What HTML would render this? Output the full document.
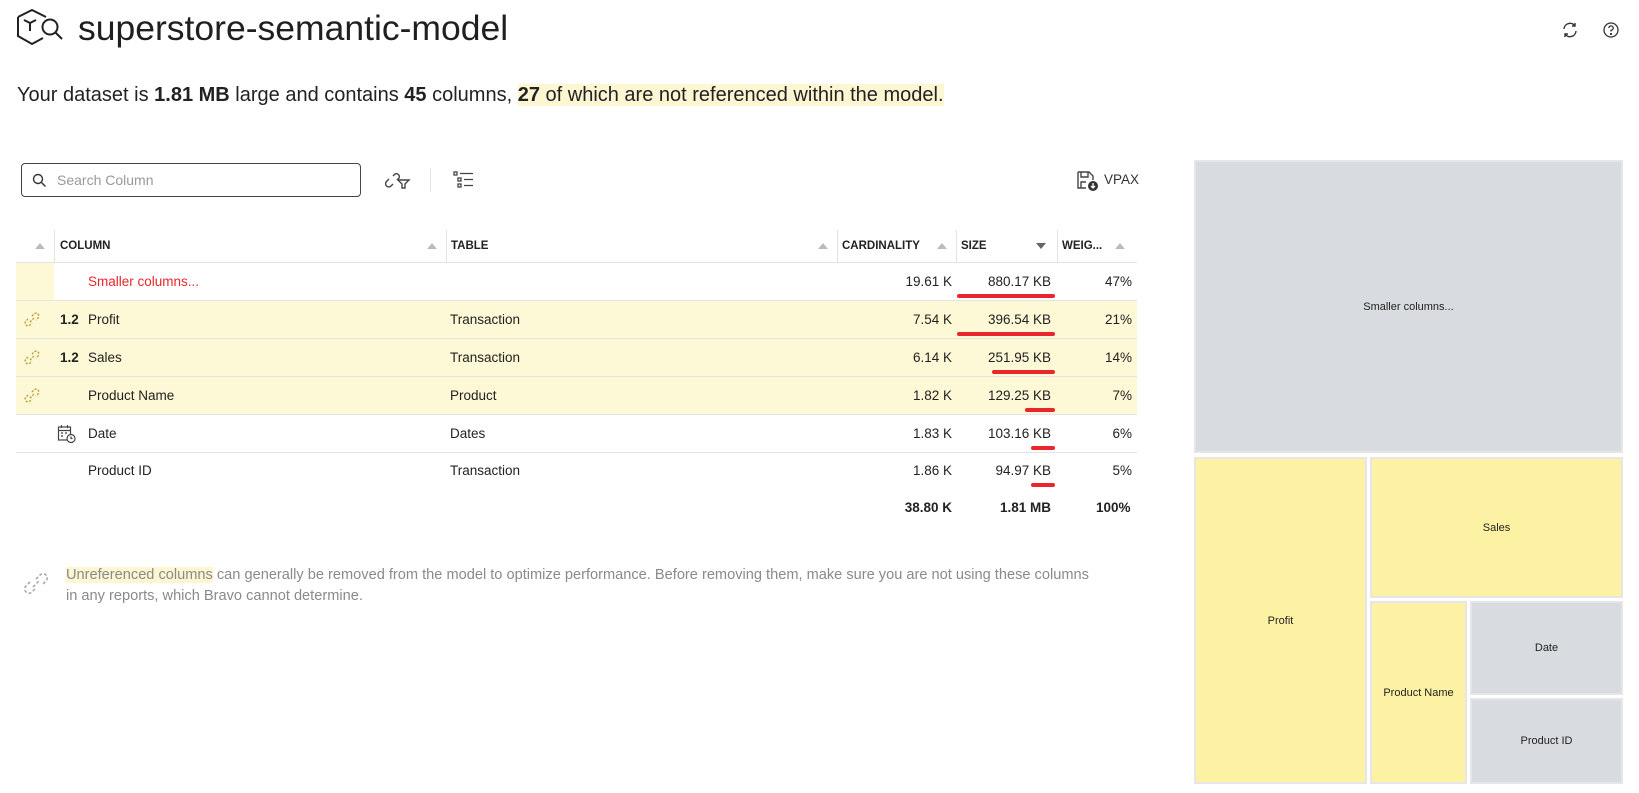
<!DOCTYPE html>
<html><head><meta charset="utf-8"><style>
*{box-sizing:border-box;margin:0;padding:0}
body{width:1639px;height:793px;background:#fff;font-family:"Liberation Sans",sans-serif;color:#222;position:relative;overflow:hidden}
.a{position:absolute}
.title{left:78px;top:8px;font-size:35.5px;color:#1f1f1f}
.sub{left:17px;top:84px;font-size:20px;color:#222}
.hl{background:#fdf6d2}
.search{left:21px;top:163px;width:340px;height:34px;border:1px solid #444;border-radius:4px}
.search span{position:absolute;left:35px;top:8px;font-size:14px;color:#999}
.th{top:230px;height:32px;font-size:11.5px;font-weight:bold;color:#222;line-height:32px}
.row{left:16px;width:1121px;height:38px;border-bottom:1px solid #e3e3e3;font-size:13.5px;line-height:37px}
.y{background:#fdf8d6}
.c{position:absolute;top:0}
.r{text-align:right}
.bar{position:absolute;height:4px;background:#e8262b;border-radius:2px}
.tm{position:absolute;border:2px solid #e6e6e6;display:flex;align-items:center;justify-content:center;font-size:11px;color:#222}
.g{background:#d8dce0}.ye{background:#fdf2a3}
.tri{position:absolute;width:0;height:0;border-left:5px solid transparent;border-right:5px solid transparent;border-bottom:6px solid #bbb}
.note{left:66px;top:565px;font-size:14.6px;color:#8a8a8a;line-height:21px;width:1080px}
.sep{background:#e3e3e3;width:1px}
</style></head><body>
<svg class="a" style="left:15px;top:7px" width="52" height="42" viewBox="0 0 52 42" fill="none" stroke="#222" stroke-width="2"><path d="M3 10 L17 3 L31 10 M3 10 V29 L17 37 L28 31"/><path d="M9 13 L15 16 L21 13 M15 16 V24"/><circle cx="35" cy="20" r="7.5"/><path d="M40.5 25.5 L47 32"/></svg>
<div class="a title">superstore-semantic-model</div>
<svg class="a" style="left:1561px;top:21px" width="18" height="18" viewBox="0 0 18 18" fill="none" stroke="#333" stroke-width="1.4"><path d="M3 8 A6 6 0 0 1 14 5 M14 2 V5 H11 M15 10 A6 6 0 0 1 4 13 M4 16 V13 H7"/></svg>
<svg class="a" style="left:1602px;top:21px" width="18" height="18" viewBox="0 0 18 18" fill="none" stroke="#333" stroke-width="1.3"><circle cx="9" cy="9" r="7"/><path d="M6.8 7 A2.2 2.2 0 1 1 9 9.3 V10.5"/><circle cx="9" cy="13" r="0.5" fill="#333"/></svg>
<div class="a sub">Your dataset is <b>1.81 MB</b> large and contains <b>45</b> columns, <span class="hl"><b>27</b> of which are not referenced within the model.</span></div>
<div class="a search"><svg class="a" style="left:10px;top:9px" width="15" height="15" viewBox="0 0 15 15" fill="none" stroke="#333" stroke-width="1.4"><circle cx="6" cy="6" r="4.5"/><path d="M9.5 9.5 L13.5 13.5"/></svg><span>Search Column</span></div>
<svg class="a" style="left:385px;top:170px" width="26" height="20" viewBox="0 0 26 20" fill="none" stroke="#444" stroke-width="1.4"><path d="M4 9 L1.5 11.5 A3 3 0 0 0 6 16 L8 14 M8 6 L10 4 A3 3 0 0 1 14 8 L12 10"/><path d="M13 10 H24 L20 14 V18 L17 18 V14 Z"/></svg>
<div class="a sep" style="left:430px;top:168px;height:24px"></div>
<svg class="a" style="left:453px;top:171px" width="22" height="18" viewBox="0 0 22 18" fill="none" stroke="#444" stroke-width="1.3"><rect x="1" y="1" width="3" height="3"/><rect x="5" y="7" width="3" height="3"/><rect x="5" y="13" width="3" height="3"/><path d="M7 2.5 H20 M11 8.5 H20 M11 14.5 H20"/></svg>
<svg class="a" style="left:1076px;top:170px" width="24" height="22" viewBox="0 0 24 22" fill="none" stroke="#444" stroke-width="1.4"><path d="M2 2 H13 L17 6 V10 M2 2 V18 H10 M5 2 V7 H12 V2 M5 18 V12 H10"/><circle cx="17" cy="16" r="5" fill="#333" stroke="none"/><path d="M17 13 V18 M15 16 L17 18 L19 16" stroke="#fff" stroke-width="1.3"/></svg>
<div class="a" style="left:1104px;top:172px;font-size:13.5px;color:#333">VPAX</div>

<div class="a" style="left:16px;top:262px;width:1121px;height:1px;background:#e3e3e3"></div>
<div class="tri" style="left:35px;top:243px"></div>
<div class="a sep" style="left:54px;top:230px;height:32px"></div>
<div class="a th" style="left:60px">COLUMN</div>
<div class="tri" style="left:427px;top:243px"></div>
<div class="a sep" style="left:446px;top:230px;height:32px"></div>
<div class="a th" style="left:451px">TABLE</div>
<div class="tri" style="left:818px;top:243px"></div>
<div class="a sep" style="left:837px;top:230px;height:32px"></div>
<div class="a th" style="left:842px">CARDINALITY</div>
<div class="tri" style="left:937px;top:243px"></div>
<div class="a sep" style="left:956px;top:230px;height:32px"></div>
<div class="a th" style="left:961px">SIZE</div>
<div class="a" style="left:1036px;top:243px;border-left:5px solid transparent;border-right:5px solid transparent;border-top:6px solid #666"></div>
<div class="a sep" style="left:1057px;top:230px;height:32px"></div>
<div class="a th" style="left:1062px">WEIG...</div>
<div class="tri" style="left:1115px;top:243px"></div>

<div class="a row" style="top:263px">
 <div class="c y" style="left:0;width:38px;height:37px"></div>
 <div class="c" style="left:72px;color:#e8262b">Smaller columns...</div>
 <div class="c r" style="right:185px">19.61 K</div><div class="c r" style="right:86px">880.17 KB</div><div class="c r" style="right:5px">47%</div>
</div>
<div class="a row y" style="top:301px">
 <div class="c" style="left:44px;font-weight:bold">1.2</div><div class="c" style="left:72px">Profit</div><div class="c" style="left:434px">Transaction</div>
 <div class="c r" style="right:185px">7.54 K</div><div class="c r" style="right:86px">396.54 KB</div><div class="c r" style="right:5px">21%</div>
</div>
<div class="a row y" style="top:339px">
 <div class="c" style="left:44px;font-weight:bold">1.2</div><div class="c" style="left:72px">Sales</div><div class="c" style="left:434px">Transaction</div>
 <div class="c r" style="right:185px">6.14 K</div><div class="c r" style="right:86px">251.95 KB</div><div class="c r" style="right:5px">14%</div>
</div>
<div class="a row y" style="top:377px">
 <div class="c" style="left:72px">Product Name</div><div class="c" style="left:434px">Product</div>
 <div class="c r" style="right:185px">1.82 K</div><div class="c r" style="right:86px">129.25 KB</div><div class="c r" style="right:5px">7%</div>
</div>
<div class="a row" style="top:415px">
 <div class="c" style="left:72px">Date</div><div class="c" style="left:434px">Dates</div>
 <div class="c r" style="right:185px">1.83 K</div><div class="c r" style="right:86px">103.16 KB</div><div class="c r" style="right:5px">6%</div>
</div>
<div class="a row" style="top:452px;border-bottom:none">
 <div class="c" style="left:72px">Product ID</div><div class="c" style="left:434px">Transaction</div>
 <div class="c r" style="right:185px">1.86 K</div><div class="c r" style="right:86px">94.97 KB</div><div class="c r" style="right:5px">5%</div>
</div>
<div class="a" style="left:16px;top:500px;width:1121px;font-size:13.5px;font-weight:bold;height:20px">
 <div class="c r" style="right:185px">38.80 K</div><div class="c r" style="right:86px">1.81 MB</div><div class="c" style="left:1080px;width:41px;overflow:hidden">100%</div>
</div>
<svg width="0" height="0" style="position:absolute"><defs><g id="lk" fill="none" stroke="#b59a2a" stroke-width="1.3"><path d="M5 8 L3 10 A2.5 2.5 0 0 0 7 14 L9 12 M9 5 L11 3 A2.5 2.5 0 0 1 15 7 L13 9 M7 11 L11 7" stroke-dasharray="2 1.5"/></g></defs></svg>
<svg class="a" style="left:23px;top:311px" width="18" height="18" viewBox="0 0 18 18"><use href="#lk"/></svg>
<svg class="a" style="left:23px;top:349px" width="18" height="18" viewBox="0 0 18 18"><use href="#lk"/></svg>
<svg class="a" style="left:23px;top:387px" width="18" height="18" viewBox="0 0 18 18"><use href="#lk"/></svg>
<svg class="a" style="left:57px;top:424px" width="20" height="20" viewBox="0 0 20 20" fill="none" stroke="#444" stroke-width="1.2"><rect x="1.5" y="3" width="12" height="13"/><path d="M1.5 6.5 H13.5 M4.5 1 V4 M10.5 1 V4 M4 9 H6 M8 9 H10 M4 12 H6"/><circle cx="14" cy="14.5" r="4" fill="#fff"/><path d="M14 12.5 V14.5 H15.5"/></svg>
<div class="bar" style="left:957px;top:294px;width:98px"></div>
<div class="bar" style="left:957px;top:332px;width:98px"></div>
<div class="bar" style="left:992px;top:370px;width:63px"></div>
<div class="bar" style="left:1025px;top:408px;width:30px"></div>
<div class="bar" style="left:1031px;top:446px;width:24px"></div>
<div class="bar" style="left:1031px;top:483px;width:24px"></div>

<svg class="a" style="left:22px;top:569px" width="28" height="30" viewBox="0 0 28 30" fill="none" stroke="#aaa" stroke-width="1.6"><path d="M8 13 L4 17 A4 4 0 0 0 10 23 L14 19 M14 10 L18 6 A4 4 0 0 1 24 12 L20 16 M11 18 L17 12" stroke-dasharray="3 2"/></svg>
<div class="a note"><span class="hl">Unreferenced columns</span> can generally be removed from the model to optimize performance. Before removing them, make sure you are not using these columns<br>in any reports, which Bravo cannot determine.</div>

<div class="tm g" style="left:1194px;top:160px;width:429px;height:293px">Smaller columns...</div>
<div class="tm ye" style="left:1194px;top:457px;width:173px;height:327px">Profit</div>
<div class="tm ye" style="left:1370px;top:457px;width:253px;height:141px">Sales</div>
<div class="tm ye" style="left:1370px;top:601px;width:97px;height:183px">Product Name</div>
<div class="tm g" style="left:1470px;top:601px;width:153px;height:94px">Date</div>
<div class="tm g" style="left:1470px;top:698px;width:153px;height:86px">Product ID</div>
</body></html>
